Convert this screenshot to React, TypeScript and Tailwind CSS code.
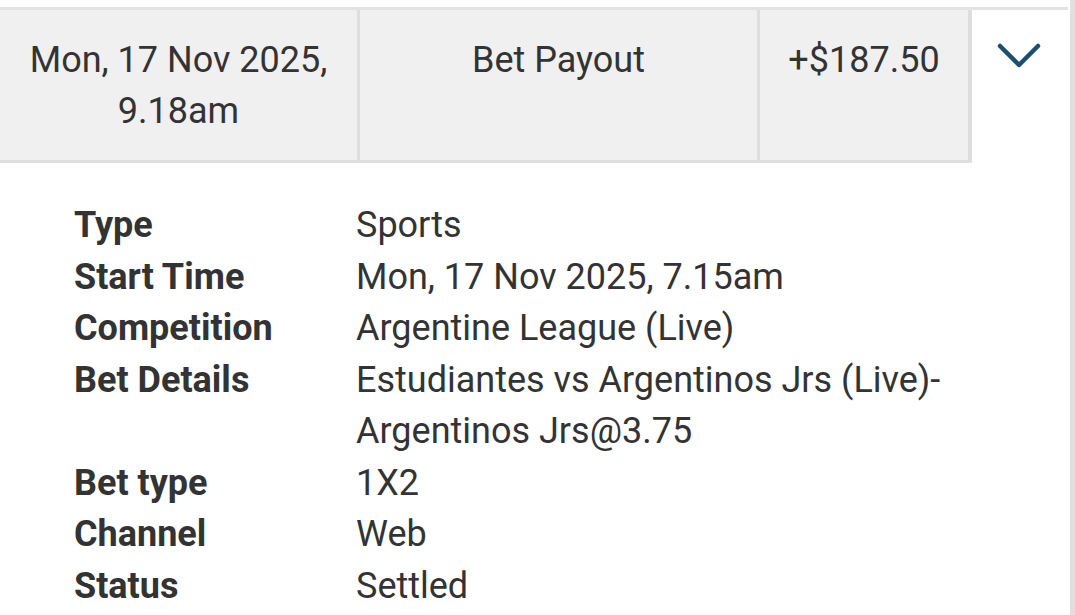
import React from 'react';

const details: { label: string; value: string }[] = [
  { label: 'Type', value: 'Sports' },
  { label: 'Start Time', value: 'Mon, 17 Nov 2025, 7.15am' },
  { label: 'Competition', value: 'Argentine League (Live)' },
  { label: 'Bet Details', value: 'Estudiantes vs Argentinos Jrs (Live)-Argentinos Jrs@3.75' },
  { label: 'Bet type', value: '1X2' },
  { label: 'Channel', value: 'Web' },
  { label: 'Status', value: 'Settled' },
];

const App: React.FC = () => {
  return (
    <div
      className="flex w-[1075px] h-[615px] overflow-hidden bg-white text-[#333333]"
      style={{ fontFamily: 'Roboto, "Noto Sans", sans-serif' }}
    >
      <div className="w-[1068px] pt-[7px]">
        {/* summary row */}
        <div className="flex border-t-[3px] border-[#e2e2e2] text-[36px] leading-[51px]">
          <div className="w-[360px] bg-[#f0f0f0] border-r-[3px] border-b-[3px] border-[#dedede] pt-[25px] pb-[23px] text-center">
            Mon, 17 Nov 2025,
            <br />
            9.18am
          </div>
          <div className="w-[400px] bg-[#f0f0f0] border-r-[3px] border-b-[3px] border-[#dedede] pt-[25px] pb-[23px] text-center">
            Bet Payout
          </div>
          <div className="w-[212px] bg-[#f0f0f0] border-r-[4px] border-b-[3px] border-[#dedede] pt-[25px] pb-[23px] text-center">
            +$187.50
          </div>
          <div className="flex-1 flex justify-center pt-[33px] pr-[2px]">
            <svg width="44" height="26" viewBox="0 0 44 26" fill="none">
              <path d="M3 3 L22 22 L41 3" stroke="#1b4f72" strokeWidth="4.5" strokeLinecap="round" strokeLinejoin="round" />
            </svg>
          </div>
        </div>

        {/* details */}
        <div className="pl-[74px] pt-[37px] pr-[60px] text-[36px] leading-[51.5px]">
          {details.map((d) => (
            <div key={d.label} className="flex">
              <div className="w-[282px] shrink-0 font-bold">{d.label}</div>
              <div className="flex-1">
                {d.label === 'Bet Details' ? (
                  <>
                    Estudiantes vs Argentinos Jrs (Live)-
                    <br />
                    Argentinos Jrs@3.75
                  </>
                ) : (
                  d.value
                )}
              </div>
            </div>
          ))}
        </div>
      </div>
      <div className="w-[2px]" />
      <div className="w-[5px] bg-[#e0e0e0]" />
    </div>
  );
};

export default App;
